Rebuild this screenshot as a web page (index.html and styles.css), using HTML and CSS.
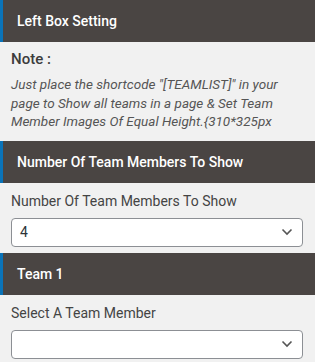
FILE: index.html
```html
<!DOCTYPE html>
<html lang="en">
<head>
    <meta charset="UTF-8">
    <meta name="viewport" content="width=device-width, initial-scale=1.0">
    <title>Team Settings</title>
    <link rel="stylesheet" href="styles.css">
</head>
<body>
    <div class="settings">
        <div class="section">
            <div class="section-title">Left Box Setting</div>
            <div class="section-body note-body">
                <div class="note-title">Note :</div>
                <div class="note-text">Just place the shortcode "[TEAMLIST]" in your page to Show all teams in a page &amp; Set Team Member Images Of Equal Height.{310*325px</div>
            </div>
        </div>

        <div class="section">
            <div class="section-title">Number Of Team Members To Show</div>
            <div class="section-body">
                <div class="field-label">Number Of Team Members To Show</div>
                <div class="select-box">
                    <span class="select-value">4</span>
                    <svg class="chevron" width="12" height="8" viewBox="0 0 12 8"><path d="M1.5 1.5 L6 6 L10.5 1.5" fill="none" stroke="#555" stroke-width="1.6"/></svg>
                </div>
            </div>
        </div>

        <div class="section">
            <div class="section-title">Team 1</div>
            <div class="section-body">
                <div class="field-label">Select A Team Member</div>
                <div class="select-box">
                    <span class="select-value"></span>
                    <svg class="chevron" width="12" height="8" viewBox="0 0 12 8"><path d="M1.5 1.5 L6 6 L10.5 1.5" fill="none" stroke="#555" stroke-width="1.6"/></svg>
                </div>
            </div>
        </div>
    </div>
</body>
</html>
```

FILE: styles.css
```css
body {
    font-family: Roboto, 'Liberation Sans', Arial, sans-serif;
    margin: 0;
    background-color: #f1f1f1;
    color: #444;
}
.settings {
    display: flex;
    flex-direction: column;
}
.section-title {
    background-color: #4a4543;
    color: #fff;
    font-size: 14px;
    font-weight: 500;
    height: 42px;
    line-height: 42px;
    padding-left: 14px;
    border-left: 3px solid #0a73b8;
}
.section-body {
    padding: 8px 12px 6px 11px;
}
.note-body {
    padding-top: 7px;
    padding-bottom: 10px;
}
.note-title {
    font-size: 15px;
    font-weight: 500;
    color: #3c3c3c;
    line-height: 20px;
    margin-bottom: 6px;
}
.note-text {
    font-size: 13.5px;
    font-style: italic;
    color: #555;
    line-height: 18.5px;
}
.field-label {
    font-size: 14px;
    color: #444;
    line-height: 20px;
    margin-bottom: 7px;
}
.select-box {
    background-color: #fff;
    border: 1px solid #8c8f94;
    border-radius: 4px;
    height: 27px;
    display: flex;
    align-items: center;
    justify-content: space-between;
    padding: 0 9px 0 8px;
}
.select-value {
    font-size: 14px;
    color: #2c3338;
}
```
